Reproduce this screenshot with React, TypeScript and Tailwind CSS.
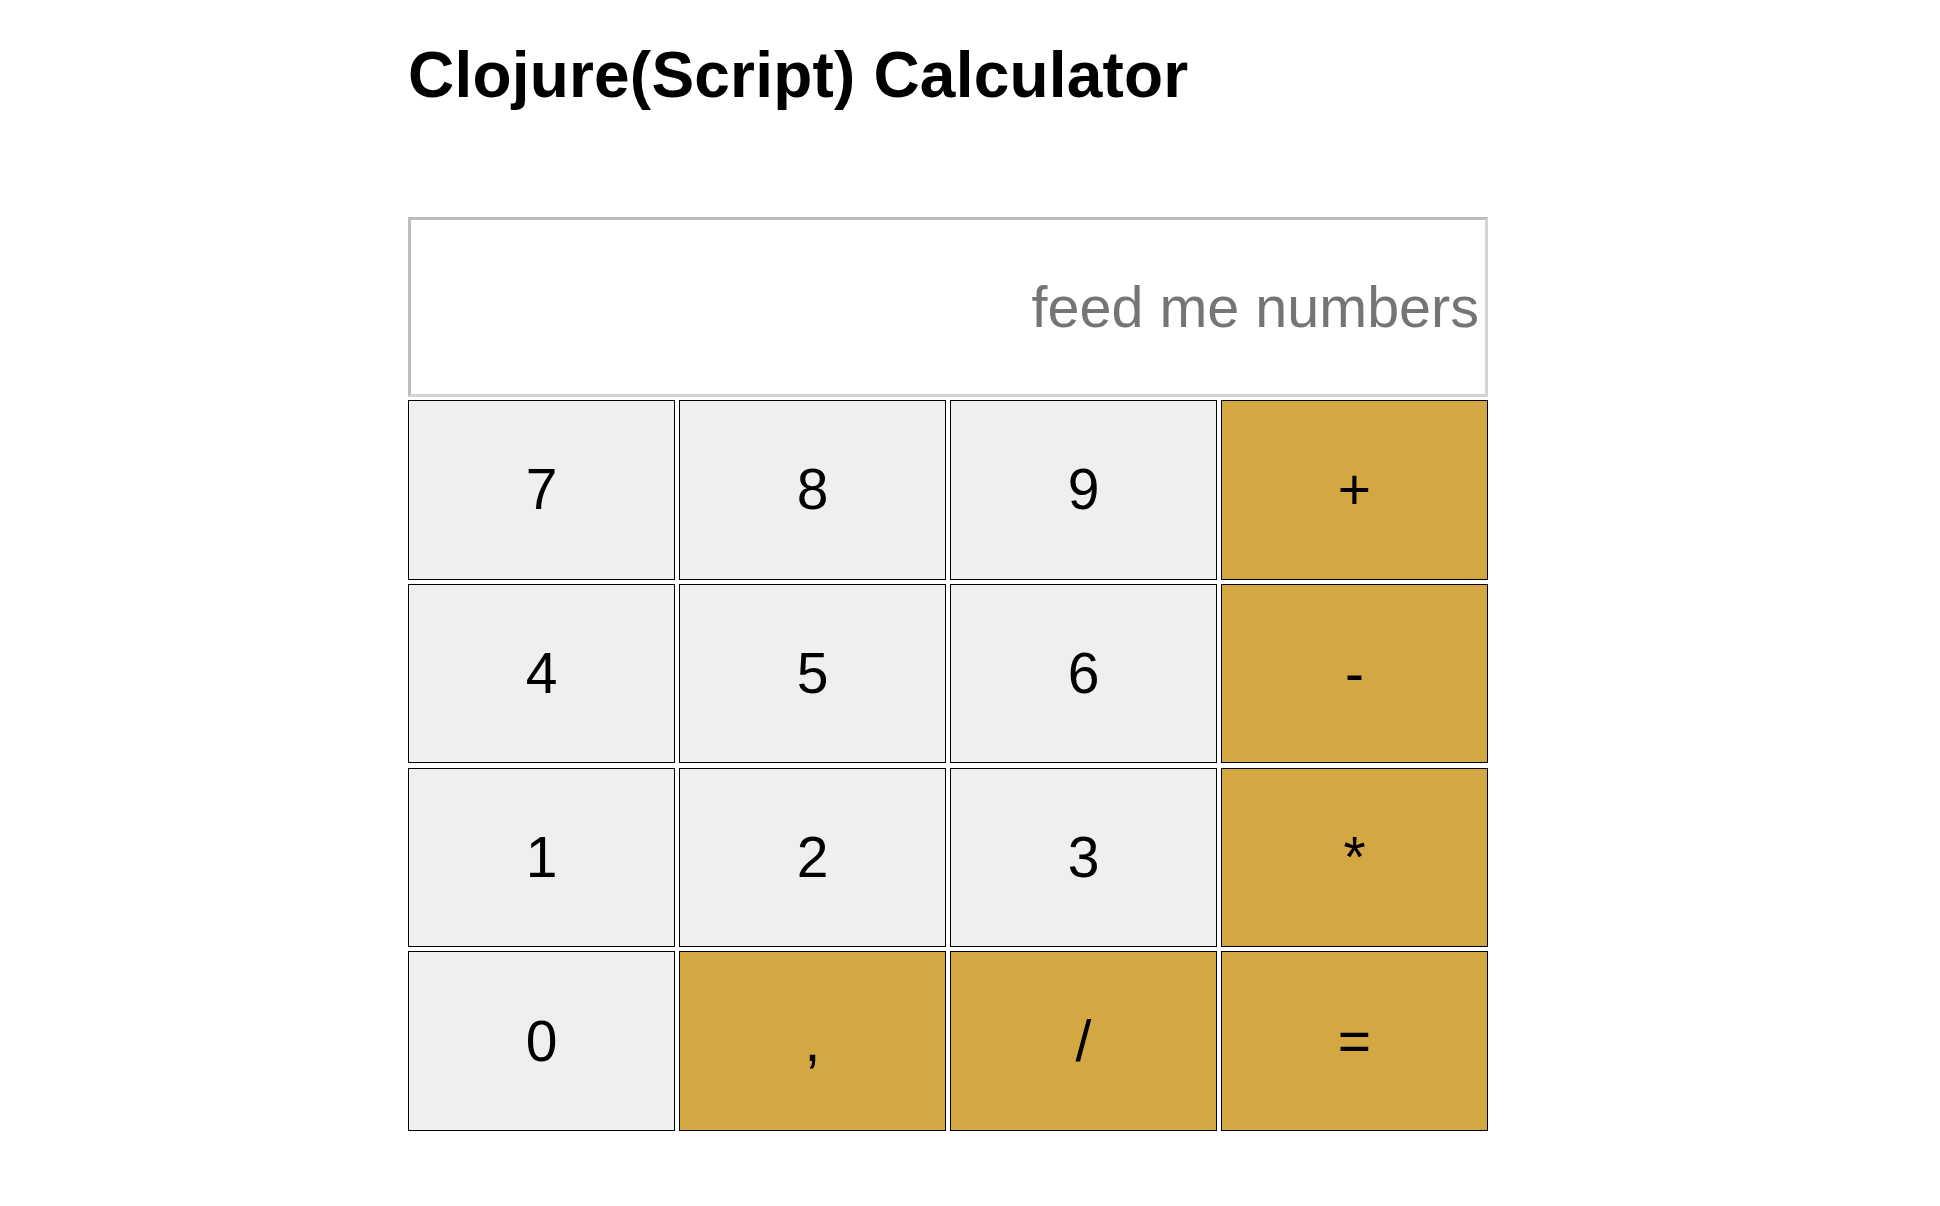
import React from "react";

const keys: { label: string; op?: boolean }[] = [
  { label: "7" }, { label: "8" }, { label: "9" }, { label: "+", op: true },
  { label: "4" }, { label: "5" }, { label: "6" }, { label: "-", op: true },
  { label: "1" }, { label: "2" }, { label: "3" }, { label: "*", op: true },
  { label: "0" }, { label: ",", op: true }, { label: "/", op: true }, { label: "=", op: true },
];

export default function App() {
  return (
    <div className="min-h-screen bg-white font-['Liberation_Sans',Arial,sans-serif] text-black">
      <div className="ml-[408px] w-[1080px] pt-[27px]">
        <h1 className="text-[64px] font-bold leading-normal tracking-[0.2px]">Clojure(Script) Calculator</h1>
        <div className="mt-[94px] flex flex-col">
          <input
            type="text"
            placeholder="feed me numbers"
            className="h-[180px] w-[1080px] border-[3px] border-t-[#bdbdbd] border-l-[#bdbdbd] border-b-[#d4d4d4] border-r-[#d4d4d4] bg-white pr-[6px] text-right text-[57.5px] font-['Liberation_Sans',Arial,sans-serif] outline-none placeholder:text-[#757575]"
          />
          <div className="mt-[3px] grid grid-cols-[repeat(4,267px)] grid-rows-[repeat(4,179.5px)] gap-x-[4px] gap-y-[4.25px]">
            {keys.map((k) => (
              <button
                key={k.label}
                className={`flex items-center justify-center border border-black text-[57px] leading-none font-['Liberation_Sans',Arial,sans-serif] ${
                  k.op ? "bg-[#d3a741]" : "bg-[#efefef]"
                }`}
              >
                {k.label}
              </button>
            ))}
          </div>
        </div>
      </div>
    </div>
  );
}
